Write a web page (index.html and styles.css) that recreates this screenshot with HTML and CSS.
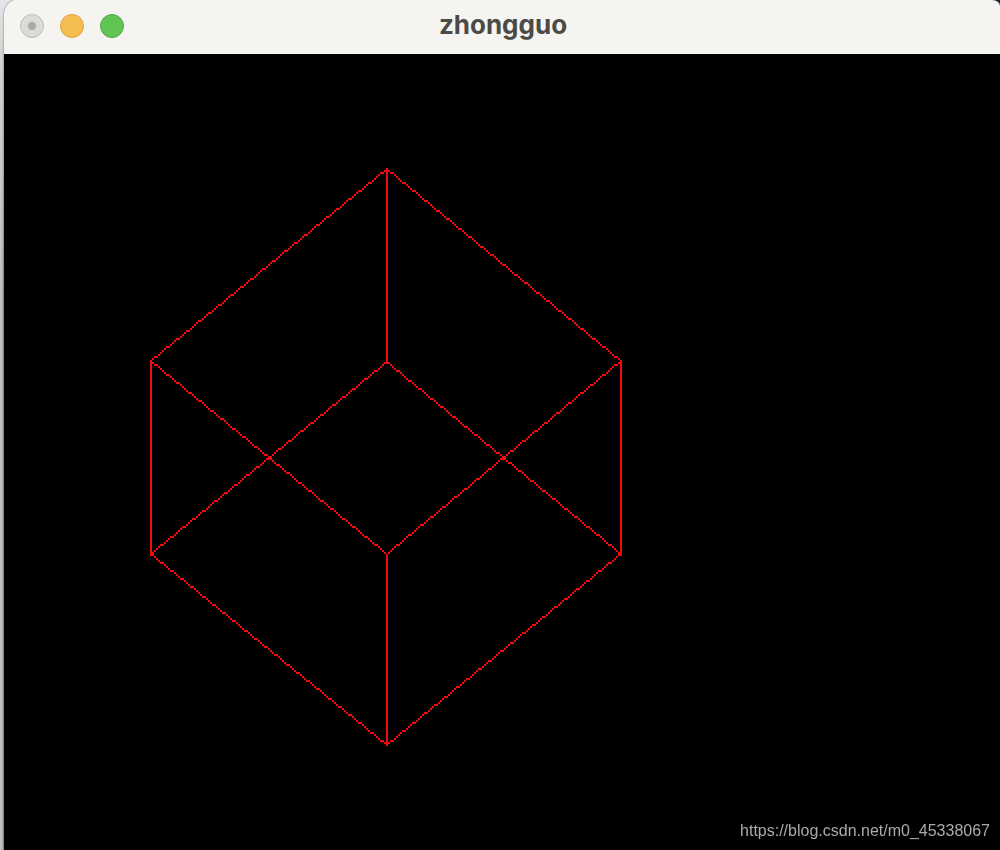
FILE: index.html
```html
<!DOCTYPE html>
<html lang="en">
<head>
<meta charset="utf-8">
<title>zhongguo</title>
<link rel="stylesheet" href="styles.css">
</head>
<body>
<main class="window">
  <header class="titlebar">
    <div class="controls">
      <button class="control control-close" type="button" aria-label="Close"></button>
      <button class="control control-minimize" type="button" aria-label="Minimize"></button>
      <button class="control control-zoom" type="button" aria-label="Zoom"></button>
    </div>
    <h1 class="title">zhongguo</h1>
  </header>
  <section class="viewport">
    <canvas class="scene" id="scene" width="400" height="398" role="img" aria-label="Wireframe cube"></canvas>
    <p class="watermark">https://blog.csdn.net/m0_45338067</p>
  </section>
</main>
<script src="scene.js"></script>
</body>
</html>
```
FILE: styles.css
```css
* {
  box-sizing: border-box;
}

body {
  margin: 0;
  min-height: 100vh;
  display: flex;
  padding-left: 4px;
  overflow: hidden;
  background:
    linear-gradient(180deg, #e4e5e7 0, #d0d1d3 60px, transparent 300px) left top / 20px 100% no-repeat,
    linear-gradient(90deg, #c4c5c6 0, #b0b1b2 3px, #77797b 4px, #1c1d2b 50%);
  font-family: "Liberation Sans", Arial, sans-serif;
}

.window {
  flex: 1;
  min-width: 0;
  display: flex;
  flex-direction: column;
  border-radius: 12px 8px 0 0 / 16px 6px 0 0;
  box-shadow: 0 0 2px #55575a;
}

.titlebar {
  display: grid;
  grid-template-columns: 1fr auto 1fr;
  align-items: center;
  height: 54px;
  padding: 0 14px 2px 16px;
  background: #f5f4f0;
  border-radius: 12px 8px 0 0 / 16px 6px 0 0;
}

.controls {
  display: flex;
  gap: 16px;
}

.control {
  display: grid;
  place-items: center;
  width: 24px;
  height: 24px;
  padding: 0;
  border: 1px solid;
  border-radius: 50%;
}

.control-close {
  background: #dcdbd8;
  border-color: #bebdba;
}

.control-close::before {
  content: "";
  width: 8px;
  height: 8px;
  border-radius: 50%;
  background: #aaa9a6;
}

.control-minimize {
  background: #f6be50;
  border-color: #d9a340;
}

.control-zoom {
  background: #61c554;
  border-color: #4fa844;
}

.title {
  margin: 0;
  padding-bottom: 2px;
  color: #4b4a47;
  font: bold 26px/30px Inter, "Liberation Sans", sans-serif;
}

.viewport {
  flex: 1;
  display: grid;
  background: #000;
  overflow: hidden;
}

.scene,
.watermark {
  grid-area: 1 / 1;
}

.scene {
  width: 800px;
  height: 796px;
  image-rendering: pixelated;
}

.watermark {
  align-self: end;
  justify-self: end;
  margin: 0;
  padding: 0 10px 10px;
  color: #aaa;
  font-size: 16px;
  line-height: 18px;
}
```
FILE: scene.js
```js
const context = document.getElementById("scene").getContext("2d");
context.fillStyle = "#f40a0a";

function drawLine(x0, y0, x1, y1) {
  const steps = Math.max(Math.abs(x1 - x0), Math.abs(y1 - y0));
  for (let i = 0; i <= steps; i++) {
    const x = Math.round(x0 + ((x1 - x0) * i) / steps);
    const y = Math.round(y0 + ((y1 - y0) * i) / steps);
    context.fillRect(x, y, 1, 1);
  }
}

const vertices = {
  top: [191, 57],
  upperLeft: [73, 153],
  upperRight: [308, 153],
  innerTop: [191, 153.5],
  innerBottom: [191, 249.5],
  lowerLeft: [73, 249.5],
  lowerRight: [308, 249.5],
  bottom: [191, 345]
};

const edges = [
  ["top", "upperLeft"],
  ["top", "upperRight"],
  ["top", "innerTop"],
  ["upperLeft", "lowerLeft"],
  ["upperRight", "lowerRight"],
  ["upperLeft", "innerBottom"],
  ["upperRight", "innerBottom"],
  ["innerTop", "lowerLeft"],
  ["innerTop", "lowerRight"],
  ["innerBottom", "bottom"],
  ["lowerLeft", "bottom"],
  ["lowerRight", "bottom"]
];

for (const [from, to] of edges) {
  drawLine(...vertices[from], ...vertices[to]);
}
```
